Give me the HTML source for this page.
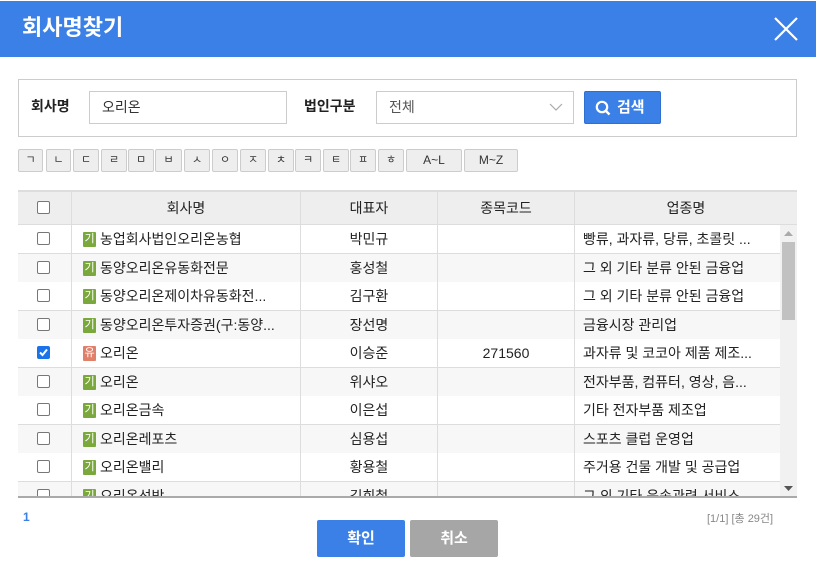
<!DOCTYPE html>
<html><head><meta charset="utf-8"><style>
*{box-sizing:border-box;margin:0;padding:0}
body{width:816px;height:567px;background:#fff;font-family:"Liberation Sans","Noto Sans CJK KR",sans-serif;color:#222;position:relative;overflow:hidden;font-size:14px}
.bar{position:absolute;left:0;top:1px;width:816px;height:56px;background:#3b80e6}
.bar h1{position:absolute;left:22px;top:13px;color:#fff;font-size:22px;font-weight:bold;line-height:28px}
.x{position:absolute;left:773px;top:15px}
.sbox{position:absolute;left:18px;top:79px;width:779px;height:58px;border:1px solid #ccc}
.lbl{position:absolute;top:96px;font-size:14px;font-weight:bold;color:#222;line-height:20px}
.inp{position:absolute;top:91px;height:33px;border:1px solid #ccc;font-size:14px;padding-left:12px;line-height:31px;color:#333}
.btn{position:absolute;left:584px;top:91px;width:77px;height:33px;background:#3b80e6;border:1px solid #2f6fd0;border-radius:2px;color:#fff;font-weight:bold;font-size:15px;line-height:31px;padding-left:32px}
.k{position:absolute;top:149px;height:23px;border:1px solid #ccc;background:#eee;font-size:11px;text-align:center;line-height:21px;color:#333;border-radius:2px}
.tbl{position:absolute;left:18px;top:190px;width:779px;height:308px;border-top:2px solid #ddd;border-bottom:2px solid #aaa;overflow:hidden}
.row{position:absolute;left:0;height:29px;width:762px;border-bottom:1px solid #ddd}
.c{position:absolute;top:0;height:100%;border-left:1px solid #ddd;line-height:28px;font-size:14px;white-space:nowrap;overflow:hidden}
.hd{background:#eee;height:33px;width:779px}
.hd .c{line-height:33px;text-align:center}
.cb{position:absolute;left:19px;top:7px;width:13px;height:13px;border:1px solid #777;border-radius:2px;background:#fff}
.hd .cb{top:9px}
.cb.on{background:#1a73e8;border-color:#1a73e8}
.nm{padding-left:28px}
.ic{position:absolute;left:11px;top:7px;width:13px;height:15px;background:#7aa83d;color:#fff;font-size:11px;line-height:15px;text-align:center;border-radius:1px}
.ic.r{background:#e0806a}
.sb{position:absolute;left:762px;top:33px;width:17px;height:273px;background:#f1f1f1}
.ft{position:absolute;top:510px;font-size:12px}
.b2{position:absolute;top:520px;width:88px;height:37px;color:#fff;font-weight:bold;font-size:15px;text-align:center;line-height:37px;border-radius:2px}
</style></head><body>
<div class="bar"><h1>회사명찾기</h1>
<svg class="x" width="26" height="26" viewBox="0 0 26 26"><path d="M2 2L24 24M24 2L2 24" stroke="#fff" stroke-width="2.2"/></svg></div>
<div class="sbox"></div>
<div class="lbl" style="left:31px">회사명</div>
<div class="inp" style="left:89px;width:198px">오리온</div>
<div class="lbl" style="left:304px">법인구분</div>
<div class="inp" style="left:376px;width:198px;color:#555">전체
<svg style="position:absolute;right:10px;top:10px" width="14" height="10" viewBox="0 0 14 10"><path d="M1 2L7 8L13 2" stroke="#aaa" fill="none" stroke-width="1.2"/></svg></div>
<div class="btn"><svg style="position:absolute;left:10px;top:8px" width="16" height="16" viewBox="0 0 16 16"><circle cx="7" cy="7" r="5.2" stroke="#fff" stroke-width="2.2" fill="none"/><path d="M10.5 10.5L14.5 14.5" stroke="#fff" stroke-width="2.4"/></svg>검색</div>
<div class="k" style="left:18px;width:25px">ㄱ</div><div class="k" style="left:46px;width:25px">ㄴ</div><div class="k" style="left:73px;width:26px">ㄷ</div><div class="k" style="left:101px;width:26px">ㄹ</div><div class="k" style="left:128px;width:26px">ㅁ</div><div class="k" style="left:155px;width:27px">ㅂ</div><div class="k" style="left:184px;width:26px">ㅅ</div><div class="k" style="left:212px;width:26px">ㅇ</div><div class="k" style="left:240px;width:26px">ㅈ</div><div class="k" style="left:268px;width:26px">ㅊ</div><div class="k" style="left:295px;width:26px">ㅋ</div><div class="k" style="left:323px;width:26px">ㅌ</div><div class="k" style="left:350px;width:26px">ㅍ</div><div class="k" style="left:378px;width:26px">ㅎ</div><div class="k" style="left:406px;width:56px;font-size:12px">A~L</div><div class="k" style="left:464px;width:54px;font-size:12px">M~Z</div>
<div class="tbl">
<div class="row hd" style="top:0"><span class="cb"></span><div class="c" style="left:53px;width:229px">회사명</div><div class="c" style="left:282px;width:137px">대표자</div><div class="c" style="left:419px;width:137px">종목코드</div><div class="c" style="left:556px;width:223px">업종명</div></div>
<div class="row" style="top:33px;background:#fff"><span class="cb"></span><div class="c nm" style="left:53px;width:229px"><span class="ic">기</span>농업회사법인오리온농협</div><div class="c" style="left:282px;width:137px;text-align:center">박민규</div><div class="c" style="left:419px;width:137px"></div><div class="c" style="left:556px;width:206px;padding-left:8px">빵류, 과자류, 당류, 초콜릿 ...</div></div>
<div class="row" style="top:62px;background:#f7f7f7"><span class="cb"></span><div class="c nm" style="left:53px;width:229px"><span class="ic">기</span>동양오리온유동화전문</div><div class="c" style="left:282px;width:137px;text-align:center">홍성철</div><div class="c" style="left:419px;width:137px"></div><div class="c" style="left:556px;width:206px;padding-left:8px">그 외 기타 분류 안된 금융업</div></div>
<div class="row" style="top:90px;background:#fff"><span class="cb"></span><div class="c nm" style="left:53px;width:229px"><span class="ic">기</span>동양오리온제이차유동화전...</div><div class="c" style="left:282px;width:137px;text-align:center">김구환</div><div class="c" style="left:419px;width:137px"></div><div class="c" style="left:556px;width:206px;padding-left:8px">그 외 기타 분류 안된 금융업</div></div>
<div class="row" style="top:119px;background:#f7f7f7"><span class="cb"></span><div class="c nm" style="left:53px;width:229px"><span class="ic">기</span>동양오리온투자증권(구:동양...</div><div class="c" style="left:282px;width:137px;text-align:center">장선명</div><div class="c" style="left:419px;width:137px"></div><div class="c" style="left:556px;width:206px;padding-left:8px">금융시장 관리업</div></div>
<div class="row" style="top:147px;background:#fff"><span class="cb on"><svg width="11" height="11" viewBox="0 0 11 11" style="position:absolute;left:0;top:0"><path d="M2 5.5L4.5 8L9 2.5" stroke="#fff" stroke-width="2" fill="none"/></svg></span><div class="c nm" style="left:53px;width:229px"><span class="ic r">유</span>오리온</div><div class="c" style="left:282px;width:137px;text-align:center">이승준</div><div class="c" style="left:419px;width:137px;text-align:center">271560</div><div class="c" style="left:556px;width:206px;padding-left:8px">과자류 및 코코아 제품 제조...</div></div>
<div class="row" style="top:176px;background:#f7f7f7"><span class="cb"></span><div class="c nm" style="left:53px;width:229px"><span class="ic">기</span>오리온</div><div class="c" style="left:282px;width:137px;text-align:center">위샤오</div><div class="c" style="left:419px;width:137px"></div><div class="c" style="left:556px;width:206px;padding-left:8px">전자부품, 컴퓨터, 영상, 음...</div></div>
<div class="row" style="top:204px;background:#fff"><span class="cb"></span><div class="c nm" style="left:53px;width:229px"><span class="ic">기</span>오리온금속</div><div class="c" style="left:282px;width:137px;text-align:center">이은섭</div><div class="c" style="left:419px;width:137px"></div><div class="c" style="left:556px;width:206px;padding-left:8px">기타 전자부품 제조업</div></div>
<div class="row" style="top:233px;background:#f7f7f7"><span class="cb"></span><div class="c nm" style="left:53px;width:229px"><span class="ic">기</span>오리온레포츠</div><div class="c" style="left:282px;width:137px;text-align:center">심용섭</div><div class="c" style="left:419px;width:137px"></div><div class="c" style="left:556px;width:206px;padding-left:8px">스포츠 클럽 운영업</div></div>
<div class="row" style="top:261px;background:#fff"><span class="cb"></span><div class="c nm" style="left:53px;width:229px"><span class="ic">기</span>오리온밸리</div><div class="c" style="left:282px;width:137px;text-align:center">황용철</div><div class="c" style="left:419px;width:137px"></div><div class="c" style="left:556px;width:206px;padding-left:8px">주거용 건물 개발 및 공급업</div></div>
<div class="row" style="top:290px;background:#f7f7f7"><span class="cb"></span><div class="c nm" style="left:53px;width:229px"><span class="ic">기</span>오리온선박</div><div class="c" style="left:282px;width:137px;text-align:center">김희철</div><div class="c" style="left:419px;width:137px"></div><div class="c" style="left:556px;width:206px;padding-left:8px">그 외 기타 운송관련 서비스</div></div>
<div class="sb"><div style="position:absolute;left:2px;top:17px;width:13px;height:78px;background:#c1c1c1"></div>
<svg style="position:absolute;left:4px;top:6px" width="9" height="5"><path d="M0 5L4.5 0L9 5Z" fill="#aaa"/></svg>
<svg style="position:absolute;left:4px;top:261px" width="9" height="5"><path d="M0 0L4.5 5L9 0Z" fill="#555"/></svg></div>
</div>
<div class="ft" style="left:23px;color:#3b80e6;font-weight:bold">1</div>
<div class="ft" style="left:707px;color:#888;font-size:11px">[1/1] [총 29건]</div>
<div class="b2" style="left:317px;background:#3b80e6">확인</div>
<div class="b2" style="left:410px;background:#a6a6a6">취소</div>
</body></html>
